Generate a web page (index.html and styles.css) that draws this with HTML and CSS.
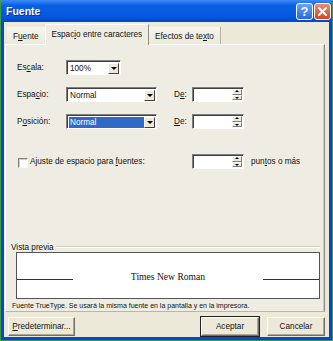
FILE: index.html
```html
<!DOCTYPE html>
<html lang="es">
<head>
    <meta charset="UTF-8">
    <title>Fuente</title>
    <link rel="stylesheet" href="styles.css">
</head>
<body>
    <div class="window">
        <div class="titlebar">
            <span class="title">Fuente</span>
            <span class="tb-btn help">?</span>
            <span class="tb-btn close">
                <svg width="11" height="11" viewBox="0 0 11 11"><path d="M2 2 L9 9 M9 2 L2 9" stroke="#fff" stroke-width="2" stroke-linecap="round"/></svg>
            </span>
        </div>

        <div class="client">
            <div class="tabs">
                <div class="tab first">F<u>u</u>ente</div>
                <div class="tab active">Espac<u>i</u>o entre caracteres</div>
                <div class="tab">Efectos de te<u>x</u>to</div>
            </div>

            <div class="panel">
                <div class="row">
                    <span class="lbl">Es<u>c</u>ala:</span>
                    <div class="combo small"><span class="val">100%</span><span class="drop"></span></div>
                </div>
                <div class="row">
                    <span class="lbl">Espa<u>c</u>io:</span>
                    <div class="combo"><span class="val">Normal</span><span class="drop"></span></div>
                    <span class="de">D<u>e</u>:</span>
                    <div class="spin"><span class="field"></span><span class="arrows"><i class="up"></i><i class="down"></i></span></div>
                </div>
                <div class="row">
                    <span class="lbl">P<u>o</u>sición:</span>
                    <div class="combo"><span class="val sel">Normal</span><span class="drop"></span></div>
                    <span class="de"><u>D</u>e:</span>
                    <div class="spin"><span class="field"></span><span class="arrows"><i class="up"></i><i class="down"></i></span></div>
                </div>
                <div class="row check-row">
                    <span class="chk"></span>
                    <span class="chk-label">Ajuste de espacio para <u>f</u>uentes:</span>
                    <div class="spin"><span class="field"></span><span class="arrows"><i class="up"></i><i class="down"></i></span></div>
                    <span class="unit">pun<u>t</u>os o más</span>
                </div>

                <div class="group">
                    <div class="group-head"><span>Vista previa</span><span class="group-line"></span></div>
                    <div class="preview">
                        <span class="pline"></span>
                        <span class="ptext">Times New Roman</span>
                        <span class="pline"></span>
                    </div>
                </div>
                <p class="note">Fuente TrueType. Se usará la misma fuente en la pantalla y en la impresora.</p>
            </div>

            <div class="footer">
                <button class="btn wide"><u>P</u>redeterminar...</button>
                <span class="spacer"></span>
                <button class="btn default">Aceptar</button>
                <button class="btn">Cancelar</button>
            </div>
        </div>
    </div>
</body>
</html>
```

FILE: styles.css
```css
body { margin: 0; font-family: "Liberation Sans", Arial, sans-serif; font-size: 8.2px; color: #111; }
u { text-decoration-thickness: 1px; text-underline-offset: 1px; }

.window { width: 333px; height: 341px; box-sizing: border-box; border: 1px solid #3c9b46; border-top: 0; background: #0846d4; display: flex; flex-direction: column; }

.titlebar { height: 22px; display: flex; align-items: center; padding: 0 1px 0 5px; background: linear-gradient(#3d8af7, #0a60e2 25%, #0558de 75%, #0347c0); }
.title { flex: 1; color: #fff; font-weight: bold; font-size: 10.5px; text-shadow: 1px 1px #0b2f8f; }
.tb-btn { width: 17px; height: 17px; box-sizing: border-box; border: 1px solid #fff; border-radius: 3px; display: flex; align-items: center; justify-content: center; margin-left: 1px; }
.help { background: linear-gradient(#6aa2fa, #2a66e4); color: #fff; font-weight: bold; font-size: 13px; }
.close { background: linear-gradient(#ec8e70, #d64420); }

.client { flex: 1; margin: 0 3px 3px; background: #ece9d8; display: flex; flex-direction: column; padding: 3px 4px 0 1px; }

.tabs { display: flex; align-items: flex-end; height: 19px; padding-left: 2px; }
.tab { height: 17px; box-sizing: border-box; padding: 1px 6px 0; display: flex; align-items: center; border-right: 1px solid #b5b2a4; background: linear-gradient(#f6f5ef, #ece9d8); }
.tab.first { border-right: 0; }
.tab.active { height: 21px; margin-bottom: -1px; padding: 0 6px 2px; background: #efede3; border: 1px solid #fff; border-right: 1px solid #8e8c80; border-bottom: 0; position: relative; z-index: 1; }

.panel { flex: 1; background: #efede3; border: 1px solid #fff; border-right-color: #8e8c80; border-bottom-color: #b9b6a8; box-shadow: inset -1px 0 #cfccbf; padding: 15px 4px 0 11px; display: flex; flex-direction: column; }

.row { display: flex; align-items: center; height: 15px; margin-bottom: 12px; }
.lbl { width: 49px; }

.combo { width: 91px; height: 15px; box-sizing: border-box; background: #fff; border: 1px solid; border-color: #7f7f7f #fff #fff #7f7f7f; box-shadow: inset 1px 1px #404040; display: flex; align-items: center; padding: 1px 1px 0 2px; }
.combo.small { width: 55px; }
.combo .val { flex: 1; height: 11px; line-height: 11px; padding-left: 1px; }
.combo .val.sel { background: #316ac5; color: #fff; }
.drop { width: 11px; height: 11px; box-sizing: border-box; background: #ece9d8; border: 1px solid; border-color: #fff #404040 #404040 #fff; position: relative; }
.drop::after { content: ""; position: absolute; left: 2px; top: 3px; border: 3px solid transparent; border-top: 3px solid #000; border-bottom: 0; }

.de { margin-left: 17px; width: 18px; }
.spin { width: 52px; height: 15px; box-sizing: border-box; background: #fff; border: 1px solid; border-color: #7f7f7f #fff #fff #7f7f7f; box-shadow: inset 1px 1px #404040; display: flex; padding: 1px 1px 1px 2px; }
.spin .field { flex: 1; }
.arrows { width: 10px; display: flex; flex-direction: column; }
.arrows i { flex: 1; background: #ece9d8; border: 1px solid; border-color: #fff #808080 #808080 #fff; position: relative; }
.arrows i::after { content: ""; position: absolute; left: 2px; border: 2px solid transparent; }
.arrows .up::after { top: 0; border-bottom: 2px solid #000; border-top: 0; }
.arrows .down::after { top: 1px; border-top: 2px solid #000; border-bottom: 0; }

.check-row { margin-top: 13px; }
.chk { width: 10px; height: 10px; box-sizing: border-box; margin: 3px 2px 0 1px; background: #fff; border: 1px solid; border-color: #808080 #fff #fff #808080; box-shadow: inset 1px 1px #d4d0c8; }
.chk-label { width: 162px; }
.unit { margin-left: 7px; }

.group { margin-top: auto; margin-left: -6px; }
.group-head { display: flex; align-items: center; height: 10px; }
.group-line { flex: 1; height: 1px; margin-left: 2px; background: #d0d0bf; border-bottom: 1px solid #fff; }
.preview { margin-left: 5px; height: 47px; box-sizing: border-box; background: #fff; border: 1px solid #555; display: flex; align-items: center; justify-content: space-between; padding-top: 2px; }
.pline { width: 56px; height: 1px; background: #333; margin-top: 6px; }
.ptext { font-family: "Liberation Serif", "Times New Roman", serif; font-size: 9.6px; color: #111; }

.note { margin: 2px 0 1px -5px; font-size: 7px; line-height: 9px; }

.footer { display: flex; align-items: center; padding: 5px 0 1px 3px; }
.spacer { flex: 1; }
.btn { font: inherit; color: #111; width: 58px; height: 19px; padding: 0; margin-left: 8px; background: #ece9d8; border: 1px solid; border-color: #fff #716f64 #716f64 #fff; box-shadow: inset -1px -1px #aca899; }
.btn.wide { width: 67px; margin-left: 0; }
.btn.default { outline: 1px solid #222; outline-offset: 0; }
```
